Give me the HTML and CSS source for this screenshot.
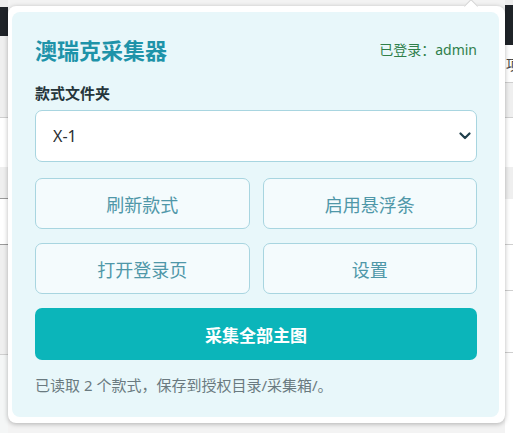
FILE: index.html
```html
<!DOCTYPE html>
<html lang="zh-CN">
<head>
    <meta charset="UTF-8">
    <meta name="viewport" content="width=device-width, initial-scale=1.0">
    <title>澳瑞克采集器</title>
    <link rel="stylesheet" href="styles.css">
</head>
<body>
    <div class="page">
        <div class="side side-left">
            <div class="band top-gap"></div>
            <div class="band dark dark-left"></div>
            <div class="band gray h82 line-light"></div>
            <div class="band white h49"></div>
            <div class="band gray h32 line-dark"></div>
            <div class="band white h46 line-dark"></div>
            <div class="band gray h110 line-light"></div>
            <div class="band pale rest"></div>
        </div>

        <div class="popup">
            <span class="popup-arrow"></span>
            <div class="panel">
                <div class="panel-header">
                    <h1 class="brand">澳瑞克采集器</h1>
                    <span class="login-state">已登录：admin</span>
                </div>

                <label class="field-label" for="folder">款式文件夹</label>
                <div class="select-wrap">
                    <select id="folder" class="folder-select">
                        <option>X-1</option>
                        <option>X-2</option>
                    </select>
                    <svg class="chevron" width="12" height="8" viewBox="0 0 12 8">
                        <path d="M1.5 1.5 L6 6 L10.5 1.5" fill="none" stroke="#1f3f4b" stroke-width="2.2" stroke-linecap="round" stroke-linejoin="round"/>
                    </svg>
                </div>

                <div class="actions">
                    <button class="btn-light">刷新款式</button>
                    <button class="btn-light">启用悬浮条</button>
                    <button class="btn-light">打开登录页</button>
                    <button class="btn-light">设置</button>
                </div>

                <button class="btn-main">采集全部主图</button>

                <p class="status">已读取 2 个款式，保存到授权目录/采集箱/。</p>
            </div>
        </div>

        <div class="side side-right">
            <div class="band top-gap-r"></div>
            <div class="band dark dark-right"></div>
            <div class="band white h38 line-light"><span class="peek">项</span></div>
            <div class="band gray h35 line-light"></div>
            <div class="band white h49"></div>
            <div class="band gray h32"></div>
            <div class="band white h46 line-light"></div>
            <div class="band white h46 line-light"></div>
            <div class="band white h62 line-light"></div>
            <div class="band white rest"></div>
        </div>
    </div>
</body>
</html>
```

FILE: styles.css
```css
* {
    box-sizing: border-box;
}

body {
    margin: 0;
    width: 513px;
    height: 433px;
    overflow: hidden;
    background-color: #f3f3f3;
    font-family: "Noto Sans", "Noto Sans CJK SC", sans-serif;
}

.page {
    display: flex;
    height: 433px;
}

/* page behind the popup */
.side {
    width: 8px;
    display: flex;
    flex-direction: column;
    overflow: hidden;
}

.band {
    flex-shrink: 0;
}

.top-gap {
    height: 7px;
    background-color: #ececec;
}

.top-gap-r {
    height: 5px;
    background-color: #ececec;
}

.dark {
    background-color: #1f2328;
}

.dark-left {
    height: 29px;
}

.dark-right {
    height: 40px;
}

.gray {
    background-color: #efefef;
}

.white {
    background-color: #fff;
}

.pale {
    background-color: #f4f6f6;
}

.line-light {
    border-bottom: 1px solid #cfcfcf;
}

.line-dark {
    border-bottom: 1px solid #9a9a9a;
}

.h32 { height: 32px; }
.h35 { height: 35px; }
.h38 { height: 38px; }
.h46 { height: 46px; }
.h49 { height: 49px; }
.h62 { height: 62px; }
.h82 { height: 82px; }
.h110 { height: 110px; }

.rest {
    flex: 1;
}

.peek {
    display: block;
    margin: 12px 0 0 1px;
    font-size: 14px;
    line-height: 16px;
    color: #444;
    white-space: nowrap;
}

/* popup */
.popup {
    position: relative;
    z-index: 1;
    width: 497px;
    height: 417px;
    margin-top: 6px;
    padding: 6px 6px 6px 4px;
    background-color: #fff;
    border-radius: 8px;
    box-shadow: 0 1px 5px rgba(0, 0, 0, 0.28);
}

.popup-arrow {
    position: absolute;
    top: -5px;
    left: 458px;
    width: 10px;
    height: 10px;
    background-color: #fff;
    border-left: 1px solid #d4d4d4;
    border-top: 1px solid #d4d4d4;
    transform: rotate(45deg);
}

.panel {
    position: relative;
    height: 100%;
    background-color: #e8f7fa;
    border-radius: 8px;
    padding: 23px 22px 0 23px;
}

.panel-header {
    display: flex;
    justify-content: space-between;
    align-items: center;
    height: 30px;
    margin-bottom: 18px;
}

.brand {
    margin: 0;
    font-size: 22px;
    font-weight: bold;
    color: #1e93a9;
    line-height: 30px;
}

.login-state {
    font-size: 14px;
    color: #2f7f4a;
    line-height: 30px;
}

.field-label {
    display: block;
    font-size: 15px;
    font-weight: bold;
    color: #25353b;
    line-height: 21px;
    margin-bottom: 6px;
}

.select-wrap {
    position: relative;
    margin-bottom: 16px;
}

.folder-select {
    appearance: none;
    -webkit-appearance: none;
    display: block;
    width: 100%;
    height: 52px;
    padding: 0 17px;
    font-family: "Noto Sans", "Noto Sans CJK SC", sans-serif;
    font-size: 16px;
    color: #2b2f31;
    background-color: #fff;
    border: 1px solid #a8d5e0;
    border-radius: 7px;
    outline: none;
}

.chevron {
    position: absolute;
    right: 6px;
    top: 22px;
    pointer-events: none;
}

.actions {
    display: grid;
    grid-template-columns: 1fr 1fr;
    gap: 14px 13px;
    margin-bottom: 14px;
}

.btn-light {
    height: 51px;
    font-family: "Noto Sans", "Noto Sans CJK SC", sans-serif;
    font-size: 18px;
    color: #4f97a8;
    background-color: #f4fbfd;
    border: 1px solid #a8d5e0;
    border-radius: 7px;
    cursor: pointer;
}

.btn-main {
    display: block;
    width: 100%;
    height: 52px;
    font-family: "Noto Sans", "Noto Sans CJK SC", sans-serif;
    font-size: 17px;
    font-weight: bold;
    color: #fff;
    background-color: #0bb5ba;
    border: none;
    border-radius: 7px;
    cursor: pointer;
}

.status {
    margin: 15px 0 0;
    font-size: 15px;
    line-height: 21px;
    color: #6a7a80;
}
```
